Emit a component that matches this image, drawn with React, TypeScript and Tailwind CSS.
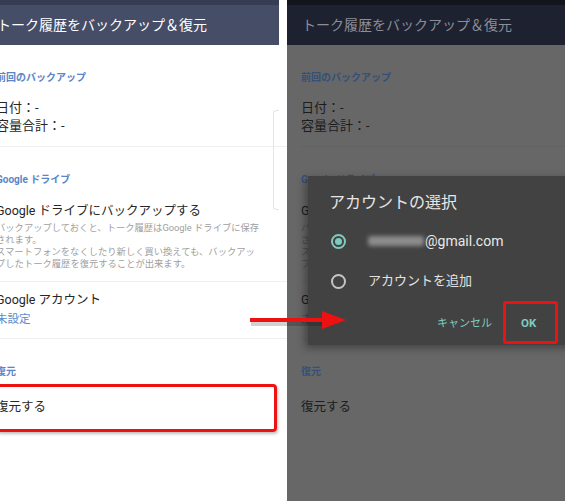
import React from 'react';

const FONT = { fontFamily: 'Roboto, "Noto Sans CJK JP", sans-serif' };

function Screen({ dim }: { dim: boolean }) {
  const label = dim ? 'text-[#34507a]' : 'text-[#5a86c8]';
  const main = dim ? 'text-[#1c1c1c]' : 'text-[#262626]';
  const desc = dim ? 'text-[#4c4c4c]' : 'text-[#a0a0a0]';
  const line = dim ? 'bg-[#626262]' : 'bg-[#efefef]';
  const link = dim ? 'text-[#34507a]' : 'text-[#5a8ad0]';

  return (
    <div className="flex flex-col">
      <div className={`h-[40px] flex items-center ${dim ? 'bg-[#1d2130] pl-[15px]' : 'bg-[#454d67] w-[279px]'}`}>
        <span className={`text-[14px] ${dim ? 'text-[#8b8e96]' : 'text-white -ml-[3px]'}`}>
          トーク履歴をバックアップ＆復元
        </span>
      </div>

      <div className={dim ? 'pl-[14px]' : '-ml-[4px]'}>
        <div className="pt-[26px] pb-[11px]">
          <div className={`text-[10px] leading-[14px] font-bold ${label}`}>前回のバックアップ</div>
          <div className={`mt-[14px] text-[13px] leading-[18px] ${main}`}>日付：-</div>
          <div className={`text-[13px] leading-[18px] ${main}`}>容量合計：-</div>
        </div>
        <div className={`h-px ${line}`} />

        <div className="pt-[26px] pb-[11px]">
          <div className={`text-[10px] leading-[14px] font-bold ${label}`}>Google ドライブ</div>
          <div className={`mt-[15px] text-[12.5px] leading-[18px] ${main}`}>Google ドライブにバックアップする</div>
          <div className={`mt-[2px] text-[9.3px] leading-[12px] ${desc}`}>
            <div>バックアップしておくと、トーク履歴はGoogle ドライブに保存</div>
            <div>されます。</div>
            <div>スマートフォンをなくしたり新しく買い換えても、バックアッ</div>
            <div>プしたトーク履歴を復元することが出来ます。</div>
          </div>
        </div>
        <div className={`h-px ${line}`} />

        <div className="pt-[9px] pb-[11px]">
          <div className={`text-[12.5px] leading-[18px] ${main}`}>Google アカウント</div>
          <div className={`mt-[2px] text-[11.5px] leading-[16px] ${link}`}>未設定</div>
        </div>
        <div className={`h-px ${line}`} />

        <div className="pt-[26px]">
          <div className={`text-[10px] leading-[14px] font-bold ${label}`}>復元</div>
          <div className={`mt-[19px] text-[12.5px] leading-[18px] ${main}`}>復元する</div>
        </div>
      </div>
    </div>
  );
}

export default function App() {
  return (
    <div className="relative w-[565px] h-[501px] overflow-hidden flex" style={FONT}>
      {/* left: before */}
      <div className="relative w-[287px] h-full bg-white flex flex-col overflow-hidden">
        <div className="h-[5px] w-[279px] bg-[#363c52]" />
        <Screen dim={false} />
        <div className="absolute left-[273px] top-[110px] w-[6px] h-[100px] border-l border-t border-b border-[#e4e4e4] rounded-l-[4px]" />
      </div>

      {/* right: account picker */}
      <div className="relative flex-1 h-full bg-[#676767] flex flex-col overflow-hidden">
        <div className="h-[5px] bg-[#13151d]" />
        <Screen dim={true} />

        <div className="absolute left-[21px] top-[176px] w-[300px] h-[169px] bg-[#424242] shadow-[-3px_3px_8px_rgba(0,0,0,0.35)] flex flex-col">
          <div className="pl-[21px] pt-[15px] text-[16px] leading-[24px] text-[#e6e6e6]">アカウントの選択</div>

          <div className="mt-[15px] flex items-center h-[22px] pl-[23px]">
            <div className="w-[15px] h-[15px] rounded-full border-2 border-[#7fcbc0] flex items-center justify-center">
              <div className="w-[7px] h-[7px] rounded-full bg-[#7fcbc0]" />
            </div>
            <div className="ml-[22px] w-[56px] h-[10px] rounded-[3px] bg-[#8c8c8c] blur-[2px]" />
            <span className="ml-[1px] text-[14px] text-[#e8e8e8]">@gmail.com</span>
          </div>

          <div className="mt-[18px] flex items-center h-[22px] pl-[23px]">
            <div className="w-[15px] h-[15px] rounded-full border-2 border-[#c4c4c4]" />
            <span className="ml-[22px] text-[13px] text-[#e2e2e2]">アカウントを追加</span>
          </div>

          <div className="mt-[22px] flex items-center h-[20px] pl-[129px]">
            <span className="text-[11px] text-[#7fcbc0]">キャンセル</span>
            <span className="ml-[29px] text-[11.5px] font-bold text-[#7fcbc0]">OK</span>
          </div>

          <div className="absolute left-[195px] top-[125px] w-[55px] h-[43px] border-[3px] border-[#ee1111] rounded-[3px]" />
        </div>
      </div>

      {/* annotations */}
      <div className="absolute left-[-4px] top-[384px] w-[281px] h-[48px] border-[3px] border-[#ee1111] rounded-[4px] shadow-[1px_2px_3px_rgba(0,0,0,0.25)]" />
      <svg className="absolute left-[246px] top-[306px]" width="104" height="30" viewBox="0 0 104 30">
        <rect x="5" y="15" width="74" height="5" fill="rgba(0,0,0,0.18)" />
        <rect x="4" y="12" width="74" height="4" fill="#ee1111" />
        <polygon points="76,5 100,14 76,23" fill="#ee1111" />
      </svg>
    </div>
  );
}
